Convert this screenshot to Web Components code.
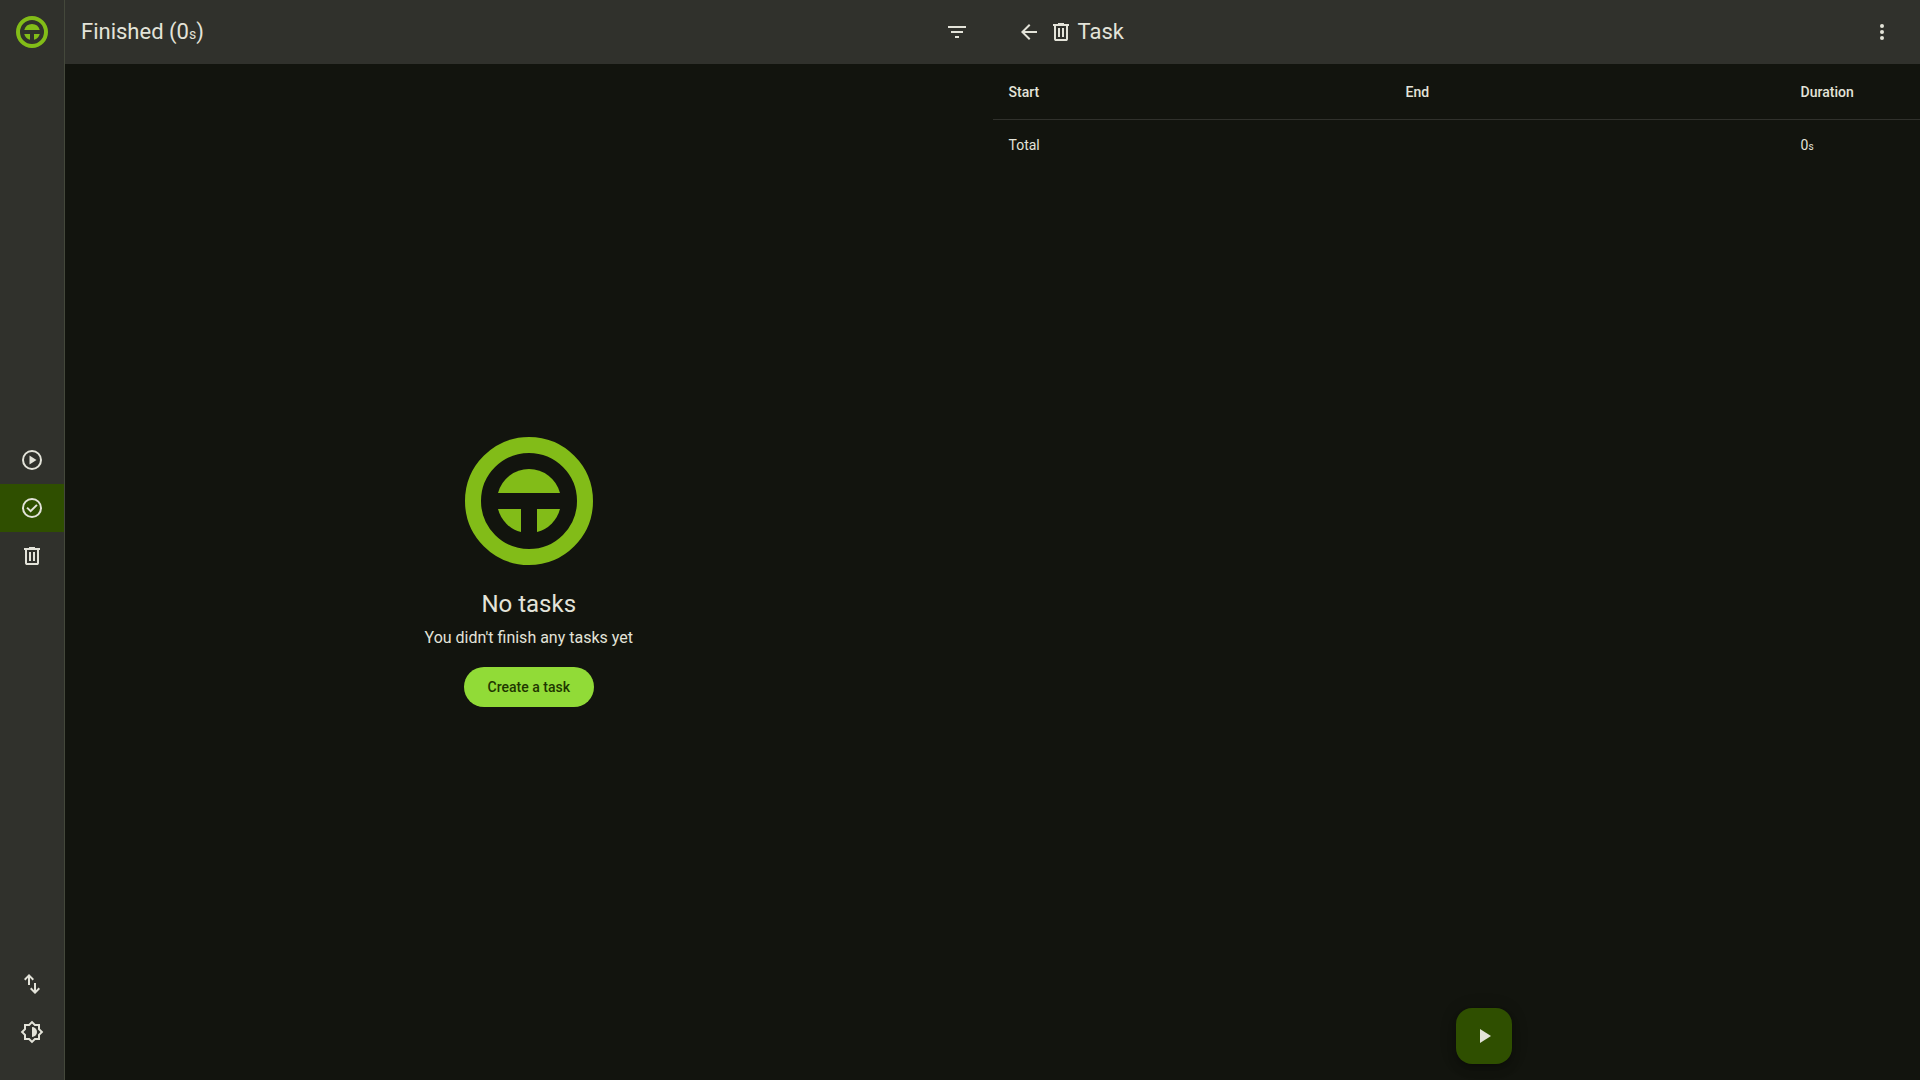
<!DOCTYPE html>
<html lang="en">
<head>
<meta charset="utf-8">
<title>Finished tasks</title>
<style>
  html, body { height: 100%; margin: 0; }
  body {
    --surface: #12140e;
    --bar: #30312c;
    --text: #e3e3d9;
    --outline: #44483b;
    --brand: #82bc18;
    --primary: #91db37;
    --on-primary: #1f3700;
    --selected: #2f4f00;
    background: var(--surface);
    color: var(--text);
    font: 14px/20px Roboto, sans-serif;
  }
</style>
</head>
<body>
<task-app></task-app>
<script>
const ICONS = {
  play: '<path d="M8 5v14l11-7z"/>',
  active: '<circle cx="12" cy="12" r="9" fill="none" stroke="currentColor" stroke-width="2"/><path d="m9.5 16.5 7-4.5-7-4.5z"/>',
  finished: '<circle cx="12" cy="12" r="9" fill="none" stroke="currentColor" stroke-width="2"/><path d="m10.6 16.6 7.05-7.05-1.4-1.4-5.65 5.65-2.85-2.85-1.4 1.4z"/>',
  trash: '<path fill-rule="evenodd" d="M7 21q-.825 0-1.413-.587T5 19V6H4V4h5V3h6v1h5v2h-1v13q0 .825-.587 1.413T17 21zM17 6H7v13h10zM9 17h2V8H9zm4 0h2V8h-2z"/>',
  filter: '<path d="M3 6h18v2H3zM6 11h12v2H6zM10 16h4v2h-4z"/>',
  back: '<path d="m7.825 13 5.6 5.6L12 20l-8-8 8-8 1.425 1.4-5.6 5.6H20v2z"/>',
  more: '<circle cx="12" cy="6" r="2"/><circle cx="12" cy="12" r="2"/><circle cx="12" cy="18" r="2"/>',
  swap: '<path d="M8 13V5.825L5.425 8.4 4 7l5-5 5 5-1.425 1.4L10 5.825V13zm7 9-5-5 1.425-1.4L14 18.175V11h2v7.175l2.575-2.575L20 17z"/>',
  theme: '<path fill-rule="evenodd" d="M12 23.3 8.65 20H4v-4.65L.7 12 4 8.65V4h4.65L12 .7 15.35 4H20v4.65L23.3 12 20 15.35V20h-4.65zm0-2.8 2.5-2.5H18v-3.5l2.5-2.5L18 9.5V6h-3.5L12 3.5 9.5 6H6v3.5L3.5 12 6 14.5V18h3.5z"/><path d="M12 17a5 5 0 0 0 0-10z"/>'
};

const define = (name, html) => {
  customElements.define(name, class extends HTMLElement {
    constructor() {
      super();
      this.attachShadow({ mode: 'open' }).innerHTML = html;
    }
  });
};

customElements.define('app-icon', class extends HTMLElement {
  connectedCallback() {
    if (this.shadowRoot) return;
    this.attachShadow({ mode: 'open' }).innerHTML = `
      <style>
        :host { display: block; flex: none; width: 24px; height: 24px; }
        svg { display: block; width: 100%; height: 100%; fill: currentColor; }
      </style>
      <svg viewBox="0 0 24 24" aria-hidden="true">${ICONS[this.getAttribute('name')]}</svg>`;
  }
});

define('app-logo', `
  <style>
    :host { display: block; flex: none; width: 32px; height: 32px; }
    svg { display: block; width: 100%; height: 100%; fill: var(--brand); }
  </style>
  <svg viewBox="0 0 128 128" aria-hidden="true">
    <circle cx="64" cy="64" r="56" fill="none" stroke="var(--brand)" stroke-width="16"/>
    <path d="M33.016 56a32 32 0 0 1 61.968 0z"/>
    <path d="M33.016 72H56v22.984A32 32 0 0 1 33.016 72z"/>
    <path d="M94.984 72H72v22.984A32 32 0 0 0 94.984 72z"/>
  </svg>`);

customElements.define('icon-button', class extends HTMLElement {
  connectedCallback() {
    if (this.shadowRoot) return;
    this.attachShadow({ mode: 'open' }).innerHTML = `
      <style>
        :host { display: block; flex: none; }
        button {
          display: grid; place-items: center; width: 40px; height: 40px;
          padding: 0; border: 0; border-radius: 50%;
          background: none; color: inherit; cursor: pointer;
        }
        button:hover { background: var(--outline); }
      </style>
      <button type="button" aria-label="${this.getAttribute('label')}"><slot></slot></button>`;
  }
});

customElements.define('rail-link', class extends HTMLElement {
  connectedCallback() {
    if (this.shadowRoot) return;
    this.attachShadow({ mode: 'open' }).innerHTML = `
      <style>
        :host { display: block; }
        a { display: grid; place-items: center; height: 48px; color: inherit; }
        :host([active]) a { background: var(--selected); }
      </style>
      <a href="#${this.getAttribute('to')}" aria-label="${this.getAttribute('label')}"><slot></slot></a>`;
  }
});

define('app-rail', `
  <style>
    :host {
      display: flex; flex-direction: column; justify-content: space-between; flex: none;
      width: 64px; background: var(--bar); border-right: 1px solid var(--outline);
    }
    .home { display: grid; place-items: center; height: 64px; }
    .tools { padding: 8px 0 24px; }
  </style>
  <a class="home" href="#home" aria-label="Home"><app-logo></app-logo></a>
  <nav>
    <rail-link to="active" label="Active"><app-icon name="active"></app-icon></rail-link>
    <rail-link to="finished" label="Finished" active><app-icon name="finished"></app-icon></rail-link>
    <rail-link to="trash" label="Trash"><app-icon name="trash"></app-icon></rail-link>
  </nav>
  <div class="tools">
    <rail-link to="transfer" label="Import and export"><app-icon name="swap"></app-icon></rail-link>
    <rail-link to="theme" label="Theme"><app-icon name="theme"></app-icon></rail-link>
  </div>`);

define('app-toolbar', `
  <style>
    :host {
      display: flex; align-items: center; flex: none; box-sizing: border-box;
      height: 64px; padding: 0 16px; background: var(--bar);
    }
    h1 {
      display: flex; align-items: center; gap: 5px; flex: 1;
      margin: 0; font-size: 22px; line-height: 28px; font-weight: 400;
    }
  </style>
  <slot name="start"></slot>
  <h1><slot name="icon"></slot><span><slot></slot></span></h1>
  <slot name="end"></slot>`);

define('empty-state', `
  <style>
    :host {
      display: flex; flex-direction: column; align-items: center; justify-content: center;
      gap: 16px; flex: 1; text-align: center;
    }
    app-logo { width: 128px; height: 128px; }
    .message { padding-top: 2px; }
    h2 { margin: 0; font-size: 24px; line-height: 42px; font-weight: 400; }
    p { margin: 0; font-size: 16px; line-height: 26px; }
    button {
      height: 40px; padding: 0 24px; border: 0; border-radius: 20px;
      background: var(--primary); color: var(--on-primary);
      font: 500 14px/20px Roboto, sans-serif; cursor: pointer;
    }
  </style>
  <app-logo></app-logo>
  <div class="message">
    <h2><slot name="title"></slot></h2>
    <p><slot></slot></p>
  </div>
  <button type="button"><slot name="action"></slot></button>`);

define('session-table', `
  <style>
    :host { display: block; }
    table { width: 100%; table-layout: fixed; border-collapse: separate; border-spacing: 0; }
    .start { width: 42.8%; }
    .end { width: 42.6%; }
    th, td { box-sizing: border-box; padding: 0 16px; text-align: left; }
    th { height: 56px; font-weight: 500; border-bottom: 1px solid var(--bar); }
    td { height: 50px; }
    small { font-size: 10px; line-height: 1; }
  </style>
  <table>
    <colgroup><col class="start"><col class="end"><col></colgroup>
    <thead><tr><th scope="col">Start</th><th scope="col">End</th><th scope="col">Duration</th></tr></thead>
    <tbody><tr><td>Total</td><td></td><td>0<small>s</small></td></tr></tbody>
  </table>`);

define('start-fab', `
  <style>
    :host { display: block; position: absolute; left: 50%; bottom: 16px; }
    button {
      display: grid; place-items: center; width: 56px; height: 56px; padding: 0;
      border: 0; border-radius: 16px; background: var(--selected); color: inherit; cursor: pointer;
      box-shadow: 0 3px 5px -1px rgba(0,0,0,.2), 0 6px 10px rgba(0,0,0,.14), 0 1px 18px rgba(0,0,0,.12);
    }
  </style>
  <button type="button" aria-label="Start"><app-icon name="play"></app-icon></button>`);

define('task-app', `
  <style>
    :host { display: flex; min-height: 100vh; }
    main, section { display: flex; flex-direction: column; flex: 1 1 0; min-width: 0; }
    section { position: relative; }
    small { font-size: 14px; line-height: 1; }
    .detail { padding-right: 18px; }
  </style>
  <app-rail></app-rail>
  <main>
    <app-toolbar>
      Finished (0<small>s</small>)
      <icon-button slot="end" label="Filter"><app-icon name="filter"></app-icon></icon-button>
    </app-toolbar>
    <empty-state>
      <span slot="title">No tasks</span>
      You didn't finish any tasks yet
      <span slot="action">Create a task</span>
    </empty-state>
  </main>
  <section aria-label="Task">
    <app-toolbar class="detail">
      <icon-button slot="start" label="Back"><app-icon name="back"></app-icon></icon-button>
      <app-icon slot="icon" name="trash"></app-icon>
      Task
      <icon-button slot="end" label="More"><app-icon name="more"></app-icon></icon-button>
    </app-toolbar>
    <session-table></session-table>
    <start-fab></start-fab>
  </section>`);
</script>
</body>
</html>
